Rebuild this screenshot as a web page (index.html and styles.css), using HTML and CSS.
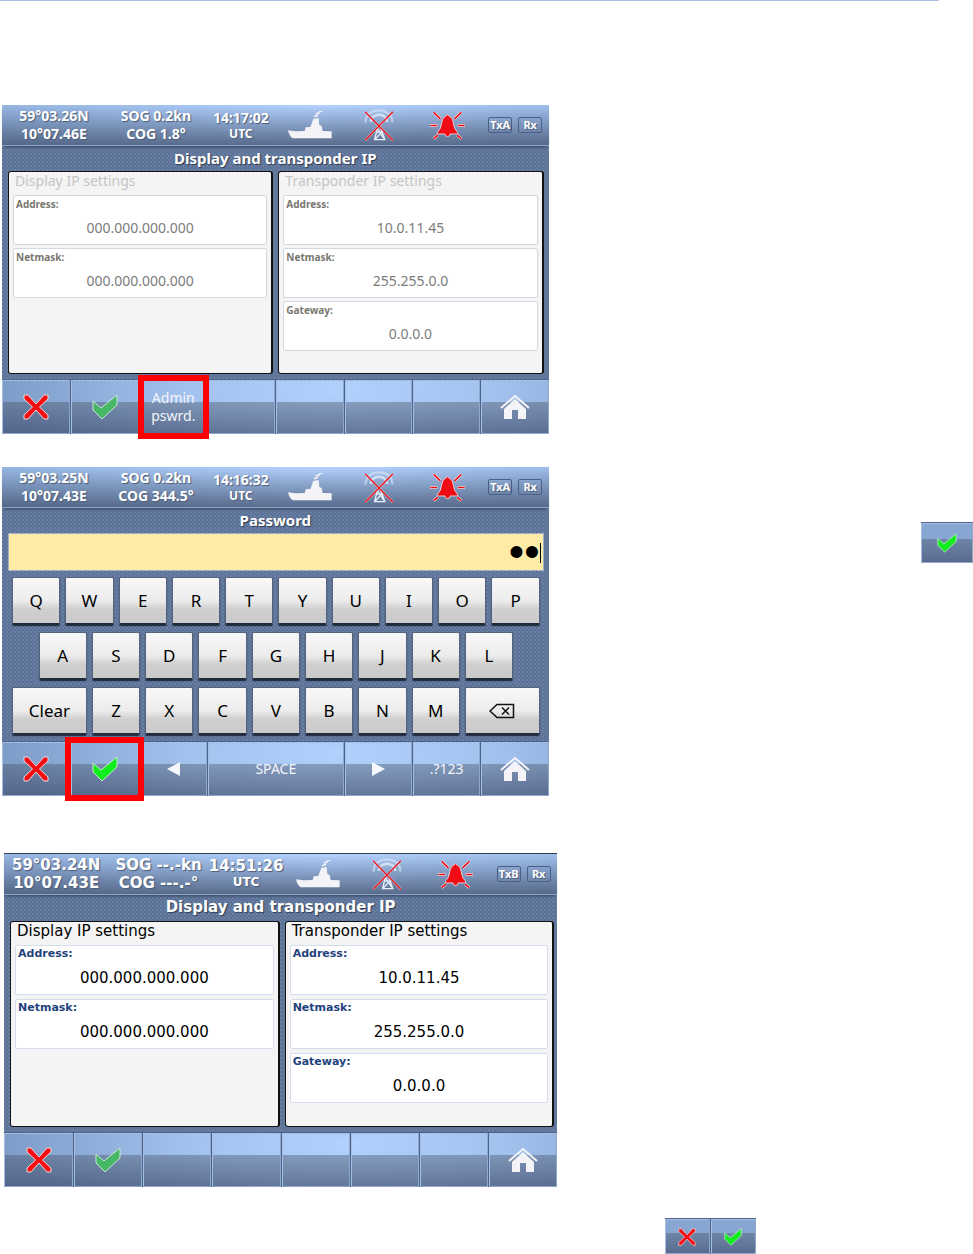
FILE: index.html
```html
<!DOCTYPE html>
<html lang="en">
<head>
  <meta charset="utf-8" />
  <meta name="viewport" content="width=device-width, initial-scale=1" />
  <title>Display and transponder IP</title>
  <link rel="stylesheet" href="styles.css">
</head>
<body>

<!-- shared icons -->
<svg class="sprite" width="0" height="0" aria-hidden="true">
  <symbol id="ship" viewBox="0 0 132 84">
    <path fill="#f4f4f8" d="M0 58l22 3 28-1 3-11 14-1 9-24 16-3 2 21 7 3 3 15 27 1v21H14Q4 76 0 58z"/>
    <path stroke="#f4f4f8" stroke-width="5" d="M78 17l12-4M83 9l12-4M93 2l10-2"/>
  </symbol>
  <symbol id="antenna" viewBox="0 0 88 94">
    <g fill="none" stroke="#e6eefb">
      <path stroke-width="7" opacity=".5" d="M5 40C2 -8 86 -8 83 40"/>
      <path stroke-width="7" opacity=".75" d="M20 38c0-28 48-28 48 0"/>
      <path stroke-width="4" d="M41 50L31 90h30L47 50zM37 68h15L33 88M40 58l18 28"/>
    </g>
    <path stroke="#fff" stroke-width="7" opacity=".6" d="M3 8l82 84M85 8L3 92"/>
    <path stroke="#e8101c" stroke-width="4" d="M3 8l82 84M85 8L3 92"/>
  </symbol>
  <symbol id="bell" viewBox="0 0 104 86">
    <g stroke="#fff" stroke-width="8">
      <path d="M11 4l20 19M93 4L73 23M0 43h22M82 43h22M11 82l12-10M93 82L81 72"/>
    </g>
    <g stroke="#f00c14" stroke-width="5">
      <path d="M11 4l20 19M93 4L73 23M1 43h20M83 43h20M11 82l12-10M93 82L81 72"/>
    </g>
    <path fill="#f00c14" stroke="#fff" stroke-width="2" d="M47 15q5-8 10 0 10 4 12 19 2 20 13 29v5H60q-1 8-8 8t-8-8H22v-5q11-9 13-29 2-15 12-19z"/>
  </symbol>
  <symbol id="cross" viewBox="0 0 26 26">
    <path fill="#f60d12" stroke="#e9dbe0" d="M1 1h4l8 9 8-9h4v4l-8.500 8 8.500 8v4h-4l-8-9-8 9H1v-4l8.500-8L1 5z"/>
  </symbol>
  <symbol id="tick" viewBox="0 0 26 26">
    <path fill="currentColor" stroke="#cfe6d8" d="M1 7l8 7L25 1v10L10 25 1 16z"/>
  </symbol>
  <symbol id="home" viewBox="0 0 30 26">
    <path fill="none" stroke="#f4f4f8" stroke-width="2" d="M1 14L15 2l14 12"/>
    <path fill="#f4f4f8" d="M4 15L15 5l11 10v10h-8V16h-6v9H4z"/>
  </symbol>
  <symbol id="erase" viewBox="0 0 26 16">
    <path fill="none" stroke="#111" stroke-width="1.5" d="M1 8l7-6.500h16.500v13H8zM13 4.500l7 7M20 4.500l-7 7"/>
  </symbol>
</svg>

<main class="page">

  <!-- 1: settings locked -->
  <section class="step">
    <div class="screen">
      <header class="status">
        <p class="info">59°03.26N<br>10°07.46E</p>
        <p class="info">SOG 0.2kn<br>COG 1.8°</p>
        <p class="clock">14:17:02<br><small>UTC</small></p>
        <svg class="ship"><use href="#ship"/></svg>
        <svg class="antenna"><use href="#antenna"/></svg>
        <svg class="bell"><use href="#bell"/></svg>
        <p class="badges"><span>TxA</span><span>Rx</span></p>
      </header>
      <h2 class="title">Display and transponder IP</h2>
      <div class="panels">
        <section class="panel">
          <h3>Display IP settings</h3>
          <div class="field"><label for="a-addr">Address:</label><input id="a-addr" value="000.000.000.000" disabled></div>
          <div class="field"><label for="a-mask">Netmask:</label><input id="a-mask" value="000.000.000.000" disabled></div>
        </section>
        <section class="panel">
          <h3>Transponder IP settings</h3>
          <div class="field"><label for="b-addr">Address:</label><input id="b-addr" value="10.0.11.45" disabled></div>
          <div class="field"><label for="b-mask">Netmask:</label><input id="b-mask" value="255.255.0.0" disabled></div>
          <div class="field"><label for="b-gate">Gateway:</label><input id="b-gate" value="0.0.0.0" disabled></div>
        </section>
      </div>
      <nav class="toolbar">
        <button type="button" aria-label="Cancel"><svg class="icon"><use href="#cross"/></svg></button>
        <button type="button" aria-label="OK" disabled><svg class="icon tick"><use href="#tick"/></svg></button>
        <button type="button" class="marked">Admin<br>pswrd.</button>
        <button type="button"></button>
        <button type="button"></button>
        <button type="button"></button>
        <button type="button"></button>
        <button type="button" aria-label="Home"><svg class="home"><use href="#home"/></svg></button>
      </nav>
    </div>
  </section>

  <!-- 2: password entry -->
  <section class="step">
    <div class="screen">
      <header class="status">
        <p class="info">59°03.25N<br>10°07.43E</p>
        <p class="info">SOG 0.2kn<br>COG 344.5°</p>
        <p class="clock">14:16:32<br><small>UTC</small></p>
        <svg class="ship"><use href="#ship"/></svg>
        <svg class="antenna"><use href="#antenna"/></svg>
        <svg class="bell"><use href="#bell"/></svg>
        <p class="badges"><span>TxA</span><span>Rx</span></p>
      </header>
      <h2 class="title"><label for="pass">Password</label></h2>
      <div class="password"><input type="password" id="pass" value="ab"></div>
      <div class="keys">
        <button type="button">Q</button>
        <button type="button">W</button>
        <button type="button">E</button>
        <button type="button">R</button>
        <button type="button">T</button>
        <button type="button">Y</button>
        <button type="button">U</button>
        <button type="button">I</button>
        <button type="button">O</button>
        <button type="button">P</button>
        <button type="button" class="indent">A</button>
        <button type="button">S</button>
        <button type="button">D</button>
        <button type="button">F</button>
        <button type="button">G</button>
        <button type="button">H</button>
        <button type="button">J</button>
        <button type="button">K</button>
        <button type="button">L</button>
        <button type="button" class="clear">Clear</button>
        <button type="button">Z</button>
        <button type="button">X</button>
        <button type="button">C</button>
        <button type="button">V</button>
        <button type="button">B</button>
        <button type="button">N</button>
        <button type="button">M</button>
        <button type="button" class="wide" aria-label="Backspace"><svg class="erase"><use href="#erase"/></svg></button>
      </div>
      <nav class="toolbar">
        <button type="button" aria-label="Cancel"><svg class="icon"><use href="#cross"/></svg></button>
        <button type="button" class="marked marked-wide" aria-label="OK"><svg class="icon tick"><use href="#tick"/></svg></button>
        <button type="button" aria-label="Left"><span class="arrow left"></span></button>
        <button type="button" class="space">SPACE</button>
        <button type="button" aria-label="Right"><span class="arrow right"></span></button>
        <button type="button">.?123</button>
        <button type="button" aria-label="Home"><svg class="home"><use href="#home"/></svg></button>
      </nav>
    </div>
    <div class="toolbar confirm">
      <button type="button" aria-label="OK"><svg class="icon tick"><use href="#tick"/></svg></button>
    </div>
  </section>

  <!-- 3: settings unlocked -->
  <section class="step last">
    <div class="screen large">
      <header class="status">
        <p class="info">59°03.24N<br>10°07.43E</p>
        <p class="info">SOG --.-kn<br>COG ---.-°</p>
        <p class="clock">14:51:26<br><small>UTC</small></p>
        <svg class="ship"><use href="#ship"/></svg>
        <svg class="antenna"><use href="#antenna"/></svg>
        <svg class="bell"><use href="#bell"/></svg>
        <p class="badges"><span>TxB</span><span>Rx</span></p>
      </header>
      <h2 class="title">Display and transponder IP</h2>
      <div class="panels">
        <section class="panel">
          <h3>Display IP settings</h3>
          <div class="field"><label for="c-addr">Address:</label><input id="c-addr" value="000.000.000.000"></div>
          <div class="field"><label for="c-mask">Netmask:</label><input id="c-mask" value="000.000.000.000"></div>
        </section>
        <section class="panel">
          <h3>Transponder IP settings</h3>
          <div class="field"><label for="d-addr">Address:</label><input id="d-addr" value="10.0.11.45"></div>
          <div class="field"><label for="d-mask">Netmask:</label><input id="d-mask" value="255.255.0.0"></div>
          <div class="field"><label for="d-gate">Gateway:</label><input id="d-gate" value="0.0.0.0"></div>
        </section>
      </div>
      <nav class="toolbar">
        <button type="button" aria-label="Cancel"><svg class="icon"><use href="#cross"/></svg></button>
        <button type="button" aria-label="OK" disabled><svg class="icon tick"><use href="#tick"/></svg></button>
        <button type="button"></button>
        <button type="button"></button>
        <button type="button"></button>
        <button type="button"></button>
        <button type="button"></button>
        <button type="button" aria-label="Home"><svg class="home"><use href="#home"/></svg></button>
      </nav>
    </div>
  </section>

  <div class="after">
    <div class="toolbar pair">
      <button type="button" aria-label="Cancel"><svg class="icon"><use href="#cross"/></svg></button>
      <button type="button" aria-label="OK"><svg class="icon tick"><use href="#tick"/></svg></button>
    </div>
  </div>

</main>
</body>
</html>
```

FILE: styles.css
```css
*{box-sizing:border-box;}
body{margin:0;background:#fff;font-family:"Noto Sans",sans-serif;}
h2,h3,p{margin:0;}
button,input{font-family:inherit;margin:0;}
.sprite{position:absolute;}

.page::before{
  content:"";
  display:block;
  width:96.5%;
  height:1px;
  margin-bottom:104px;
  background:#a9c2e4;
}
.step{
  display:flex;
  justify-content:space-between;
  align-items:flex-start;
  margin-bottom:33px;
  padding-left:2px;
}
.step.last{margin-top:57px;margin-bottom:31px;padding-left:4px;}

/* device screen */
.screen{
  width:56.3%;
  color:#fff;
  background-color:#5b7196;
  background-image:
    radial-gradient(circle at 1px 1px,#6a80a5 1px,transparent 1px),
    radial-gradient(circle at 3px 3px,#647a9f 1px,transparent 1px);
  background-size:4px 4px;
}
.screen.large{width:57.1%;font-family:"DejaVu Sans",sans-serif;}

.status{
  display:grid;
  grid-template-columns:104fr 100fr 70fr 69fr 69fr 68fr 67fr;
  align-items:center;
  justify-items:center;
  height:41px;
  border-bottom:1px solid #8fa4c4;
  box-shadow:0 3px 3px -2px #33445f;
  background:
    linear-gradient(to bottom,transparent,rgba(50,62,88,.65)),
    radial-gradient(ellipse 65% 200% at 58% 0,#b4d3ff,#93b3e0);
  font-weight:bold;
  text-align:center;
  text-shadow:1px 1px 1px #4a5c7a;
  white-space:nowrap;
}
.large .status{height:42px;border-top:1px solid #34404f;}
.info{font-size:14px;line-height:18px;}
.clock{font-size:14px;line-height:15px;}
.clock small{font-size:12px;}
.large .info,.large .clock{font-size:15px;}
.ship{width:44px;height:28px;}
.antenna{width:30px;height:32px;}
.bell{width:35px;height:29px;}
.badges{display:flex;gap:6px;font-family:"Noto Sans",sans-serif;}
.badges span{
  width:24px;
  height:16px;
  border:1px solid #4a5f85;
  border-radius:2px;
  font-size:11px;
  line-height:14px;
}

.title{
  height:25px;
  font-size:15px;
  line-height:24px;
  text-align:center;
  text-shadow:1px 1px 1px #2e3c55;
}
.large .title{height:26px;}

/* settings */
.panels{
  display:grid;
  grid-template-columns:1fr 1fr;
  gap:5px;
  min-height:203px;
  margin:0 5px 5px 6px;
}
.large .panels{min-height:206px;margin-right:3px;}
.panel{
  padding:0 4px;
  border:1px solid #111;
  border-right-width:2px;
  border-radius:3px;
  background:#f4f4f4;
}
.panel h3{
  height:23px;
  padding-left:2px;
  color:#c4c4c4;
  font-size:14px;
  font-weight:normal;
  line-height:18px;
}
.large .panel h3{color:#000;font-size:15px;}
.field{
  height:50px;
  margin-bottom:3px;
  padding:1px 2px;
  border:1px solid #d3d9e1;
  border-radius:2px;
  background:#fff;
}
.large .field{border-color:#d5dcec;margin-bottom:4px;}
.field label{
  display:block;
  color:#77776f;
  font-size:10px;
  font-weight:bold;
  line-height:14px;
}
.large .field label{color:#1f427c;font-size:11px;}
.field input{
  display:block;
  width:100%;
  height:33px;
  padding:0;
  border:0;
  background:none;
  color:#000;
  font-size:15px;
  text-align:center;
}
.field input:disabled{color:#7c7c7c;font-size:14px;}

/* password entry */
.password{position:relative;margin:0 5px 6px 6px;}
.password input{
  display:block;
  width:100%;
  height:38px;
  padding:0 3px;
  border:1px solid #9dafc9;
  background:#feeca6;
  color:#000;
  font-family:"Liberation Sans",sans-serif;
  font-size:44px;
  line-height:36px;
  text-align:right;
  outline:0;
}
/* caret */
.password::after{
  content:"";
  position:absolute;
  right:3px;
  bottom:8px;
  width:1px;
  height:20px;
  background:#000;
}
.keys{
  display:grid;
  grid-template-columns:repeat(20,1fr);
  gap:7px 5px;
  margin:0 9px 6px 10px;
}
.keys button{
  grid-column:span 2;
  height:48px;
  padding:0;
  border:1px solid #55647c;
  border-bottom:2px solid #202b3c;
  border-radius:2px;
  background:linear-gradient(to bottom,#f8f8f8,#ececec 50%,#cfcfcf 70%,#cacaca);
  box-shadow:0 1px 1px #202b3c;
  color:#000;
  font-size:17px;
}
.keys .indent{grid-column:2 / span 2;}
.keys .clear{grid-column:1 / span 3;}
.keys .wide{grid-column:span 3;}
.erase{display:block;width:26px;height:16px;margin:0 auto;}

/* bottom buttons */
.toolbar{
  display:grid;
  grid-template-columns:repeat(8,1fr);
  height:55px;
  border-top:1px solid #4e648a;
  background:
    linear-gradient(to bottom,transparent 40%,rgba(72,84,100,.4) 40%,rgba(48,58,88,.55)),
    radial-gradient(ellipse 62% 160% at 62% 20%,#b2d2fd,#a3c2ee 45%,#7e9cc8);
}
.toolbar button{
  position:relative;
  display:flex;
  align-items:center;
  justify-content:center;
  min-width:0;
  padding:0;
  border:0;
  border-left:1px solid #4b658f;
  background:none;
  box-shadow:inset -1px -1px #8fa8cc,inset 1px 1px #a4bee4;
  color:#f4f6fa;
  font-size:14px;
  line-height:18px;
}
.toolbar button:first-child{border-left:0;}
.toolbar .space{grid-column:span 2;}
.icon{width:26px;height:26px;}
.home{width:30px;height:26px;}
.tick{color:#0fee1c;}
button:disabled .tick{color:#45b766;}
.arrow{border:7px solid transparent;}
.arrow.left{border-right:13px solid #f4f6fa;border-left:0;}
.arrow.right{border-left:13px solid #f4f6fa;border-right:0;}

/* red frame round the button to press */
.marked::after{
  content:"";
  position:absolute;
  z-index:1;
  inset:-5px -2px -5px -2px;
  border:6px solid #f00;
}
.marked-wide::after{inset:-5px -5px -5px -6px;}

/* loose buttons beside the text */
.toolbar.confirm{grid-template-columns:1fr;width:52px;height:41px;margin-top:55px;}
.confirm .icon{width:20px;height:20px;}
.after{padding-left:68.3%;}
.toolbar.pair{grid-template-columns:1fr 1fr;width:91px;height:36px;}
.pair .icon{width:18px;height:18px;}
.toolbar.confirm,.toolbar.pair{
  background:
    linear-gradient(to bottom,transparent 40%,rgba(72,84,100,.4) 40%,rgba(48,58,88,.55)),
    #88a6d2;
}
```
